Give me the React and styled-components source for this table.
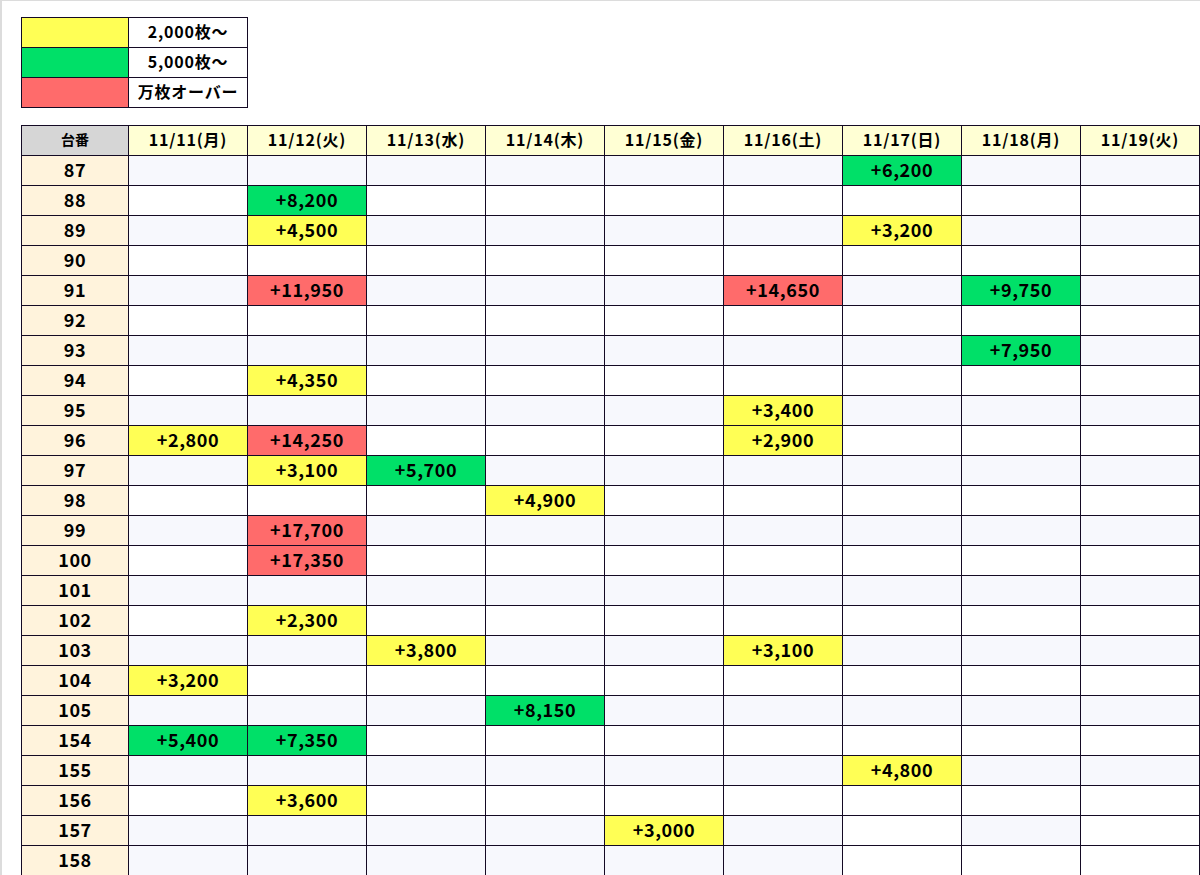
import React from "react";
import styled, { createGlobalStyle } from "styled-components";

const GlobalStyle = createGlobalStyle`
  html, body {
    margin: 0;
    padding: 0;
    background: #ffffff;
  }
  body {
    font-family: "Noto Sans CJK JP", "Noto Sans", sans-serif;
    color: #000;
  }
`;

const COLORS = {
  yellow: "#ffff55",
  green: "#00e068",
  red: "#ff6b6b",
};

const DAYS = [
  "11/11(月)",
  "11/12(火)",
  "11/13(水)",
  "11/14(木)",
  "11/15(金)",
  "11/16(土)",
  "11/17(日)",
  "11/18(月)",
  "11/19(火)",
];

// machine number -> { column index: coins }
const ROWS = [
  [87, { 6: 6200 }],
  [88, { 1: 8200 }],
  [89, { 1: 4500, 6: 3200 }],
  [90, {}],
  [91, { 1: 11950, 5: 14650, 7: 9750 }],
  [92, {}],
  [93, { 7: 7950 }],
  [94, { 1: 4350 }],
  [95, { 5: 3400 }],
  [96, { 0: 2800, 1: 14250, 5: 2900 }],
  [97, { 1: 3100, 2: 5700 }],
  [98, { 3: 4900 }],
  [99, { 1: 17700 }],
  [100, { 1: 17350 }],
  [101, {}],
  [102, { 1: 2300 }],
  [103, { 2: 3800, 5: 3100 }],
  [104, { 0: 3200 }],
  [105, { 3: 8150 }],
  [154, { 0: 5400, 1: 7350 }],
  [155, { 6: 4800 }],
  [156, { 1: 3600 }],
  [157, { 4: 3000 }],
  [158, {}],
];

// the sheet's banding is not perfectly regular at the bottom
const STRIPE_OVERRIDE = {
  157: { 6: false, 8: false },
  158: { 0: true, 1: true, 2: true, 3: true, 4: true, 5: true },
};

const levelOf = (v) => {
  if (!v) return null;
  if (v >= 10000) return "red";
  if (v >= 5000) return "green";
  if (v >= 2000) return "yellow";
  return null;
};

const Page = styled.div`
  border-top: 1px solid #dcdcdc;
  border-left: 2px solid #dcdcdc;
  padding: 16px 0 0 19px;
  height: 875px;
  box-sizing: border-box;
  overflow: hidden;
`;

const Sheet = styled.table`
  border-collapse: collapse;
  table-layout: fixed;
  border: 1px solid #140a24;
`;

const Legend = styled(Sheet)`
  margin-bottom: 17px;
`;

const Swatch = styled.td`
  width: 106px;
  height: 29px;
  padding: 0;
  border: 1px solid #140a24;
  background: ${(p) => COLORS[p.$level]};
`;

const LegendText = styled.td`
  width: 118px;
  height: 26px;
  padding: 0 0 3px;
  border: 1px solid #140a24;
  text-align: center;
  font-size: 16px;
  font-weight: 700;
  letter-spacing: 0.8px;
  line-height: 1;
`;

const HeadCell = styled.th`
  height: 26px;
  padding: 0 0 3px;
  border: 1px solid #140a24;
  background: ${(p) => (p.$corner ? "#d6d6d6" : "#ffffd4")};
  font-size: ${(p) => (p.$corner ? "14px" : "16px")};
  font-weight: 700;
  text-align: center;
  white-space: nowrap;
  letter-spacing: ${(p) => (p.$corner ? "0" : "0.8px")};
  line-height: 1;
`;

const NumCell = styled.td`
  height: 26px;
  padding: 0 0 3px;
  border: 1px solid #140a24;
  background: #fff3dc;
  font-size: 18px;
  font-weight: 700;
  text-align: center;
  letter-spacing: 0.6px;
  line-height: 1;
`;

const Cell = styled.td`
  height: 26px;
  padding: 0 0 3px;
  border: 1px solid #140a24;
  background: ${(p) =>
    p.$level ? COLORS[p.$level] : p.$striped ? "#f7f8fd" : "#ffffff"};
  font-size: 18px;
  font-weight: 700;
  text-align: center;
  letter-spacing: 0.6px;
  line-height: 1;
`;

const fmt = (v) => "+" + v.toLocaleString("en-US");

export default function App() {
  return (
    <Page>
      <GlobalStyle />
      <Legend>
        <tbody>
          <tr>
            <Swatch $level="yellow" />
            <LegendText>2,000枚～</LegendText>
          </tr>
          <tr>
            <Swatch $level="green" />
            <LegendText>5,000枚～</LegendText>
          </tr>
          <tr>
            <Swatch $level="red" />
            <LegendText>万枚オーバー</LegendText>
          </tr>
        </tbody>
      </Legend>

      <Sheet>
        <colgroup>
          <col style={{ width: 107 }} />
          {DAYS.map((d) => (
            <col key={d} style={{ width: 119 }} />
          ))}
        </colgroup>
        <thead>
          <tr>
            <HeadCell $corner>台番</HeadCell>
            {DAYS.map((d) => (
              <HeadCell key={d}>{d}</HeadCell>
            ))}
          </tr>
        </thead>
        <tbody>
          {ROWS.map(([num, vals], ri) => (
            <tr key={num}>
              <NumCell>{num}</NumCell>
              {DAYS.map((d, ci) => {
                const v = vals[ci];
                const ov = STRIPE_OVERRIDE[num];
                const striped =
                  ov && ov[ci] !== undefined ? ov[ci] : ri % 2 === 0;
                return (
                  <Cell key={d} $level={levelOf(v)} $striped={striped}>
                    {v ? fmt(v) : ""}
                  </Cell>
                );
              })}
            </tr>
          ))}
        </tbody>
      </Sheet>
    </Page>
  );
}
